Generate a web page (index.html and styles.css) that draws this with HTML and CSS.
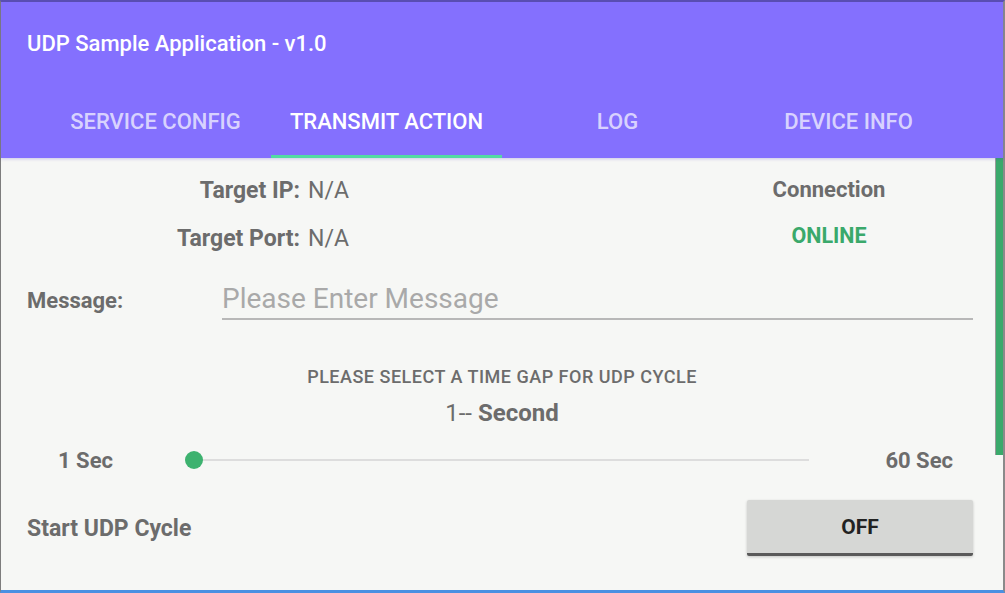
FILE: index.html
```html
<!DOCTYPE html>
<html>
<head>
<meta charset="utf-8">
<link rel="stylesheet" href="styles.css">
</head>
<body>
<div class="frame">
  <header class="appbar">
    <div class="title">UDP Sample Application - v1.0</div>
    <nav class="tabs">
      <div class="tab">SERVICE CONFIG</div>
      <div class="tab active">TRANSMIT ACTION</div>
      <div class="tab">LOG</div>
      <div class="tab">DEVICE INFO</div>
    </nav>
  </header>
  <main class="content">
    <div class="scrollbar"></div>
    <div class="info">
      <div class="lbl">Target IP:</div>
      <div class="val">N/A</div>
      <div class="conn">Connection</div>
      <div class="lbl">Target Port:</div>
      <div class="val">N/A</div>
      <div class="conn online">ONLINE</div>
    </div>
    <div class="msg-row">
      <div class="msg-label">Message:</div>
      <div class="msg-input">Please Enter Message</div>
    </div>
    <div class="gap-title">PLEASE SELECT A TIME GAP FOR UDP CYCLE</div>
    <div class="gap-value"><span class="num">1--</span> Second</div>
    <div class="slider-row">
      <div class="sec-min">1 Sec</div>
      <div class="track"><span class="thumb"></span></div>
      <div class="sec-max">60 Sec</div>
    </div>
    <div class="start-row">
      <div class="start-label">Start UDP Cycle</div>
      <div class="toggle">OFF</div>
    </div>
  </main>
</div>
</body>
</html>
```

FILE: styles.css
```css
html, body {
  margin: 0;
  padding: 0;
  overflow: hidden;
}
body {
  font-family: Roboto, "Liberation Sans", sans-serif;
  background: #f6f7f5;
}
.frame {
  width: 1005px;
  height: 593px;
  box-sizing: border-box;
  border-top: 2px solid #5a4fb3;
  border-left: 1px solid #7d7d7d;
  border-right: 2px solid #8a8a8a;
  border-bottom: 3px solid #4a90e2;
  display: flex;
  flex-direction: column;
  background: #f6f7f5;
}
.appbar {
  background: #8470fe;
  height: 156px;
  display: flex;
  flex-direction: column;
  box-shadow: 0 1px 3px rgba(80, 60, 200, 0.25);
  position: relative;
  z-index: 1;
}
.title {
  height: 84px;
  line-height: 84px;
  padding-left: 26px;
  color: #ffffff;
  font-size: 22px;
  font-weight: 500;
}
.tabs {
  height: 72px;
  display: flex;
  justify-content: center;
}
.tab {
  width: 231px;
  box-sizing: border-box;
  text-align: center;
  line-height: 71px;
  font-size: 22px;
  font-weight: 500;
  color: rgba(255, 255, 255, 0.7);
  border-bottom: 3px solid transparent;
}
.tab.active {
  color: #ffffff;
  border-bottom-color: #52dba3;
}
.content {
  flex: 1;
  position: relative;
  color: #6c6c6c;
}
.scrollbar {
  position: absolute;
  right: 0;
  top: 0;
  width: 7px;
  height: 297px;
  background: #3aa96b;
  border-left: 1px solid #9a9a9a;
}
.info {
  display: grid;
  grid-template-columns: 299px 1fr 226px;
  grid-auto-rows: 48px;
  padding-top: 8px;
  padding-right: 61px;
  align-items: center;
}
.lbl {
  text-align: right;
  font-size: 23px;
  font-weight: 700;
}
.val {
  padding-left: 8px;
  font-size: 23px;
}
.conn {
  text-align: center;
  font-size: 22px;
  font-weight: 700;
  padding-bottom: 2px;
}
.conn.online {
  color: #3aa96b;
  font-size: 21.5px;
  padding-bottom: 6px;
}
.msg-row {
  display: flex;
  align-items: center;
  margin-top: 18px;
  padding-left: 26px;
  padding-right: 30px;
}
.msg-label {
  width: 195px;
  font-size: 22px;
  font-weight: 700;
}
.msg-input {
  flex: 1;
  height: 38px;
  line-height: 38px;
  border-bottom: 2px solid #b8b8b8;
  font-size: 28px;
  color: #a9a9a9;
}
.gap-title {
  margin-top: 47px;
  text-align: center;
  line-height: 20px;
  font-size: 18px;
  letter-spacing: 0.5px;
  font-weight: 500;
}
.gap-value {
  margin-top: 13px;
  text-align: center;
  line-height: 26px;
  font-size: 24px;
  font-weight: 700;
}
.gap-value .num {
  font-weight: 400;
}
.slider-row {
  margin-top: 19px;
  height: 30px;
  display: flex;
  align-items: center;
  padding-left: 57px;
  padding-right: 50px;
  font-size: 22px;
  font-weight: 700;
}
.sec-min {
  width: 136px;
}
.track {
  flex: 1;
  height: 2px;
  background: #dddddd;
  margin-right: 76px;
  position: relative;
}
.thumb {
  position: absolute;
  left: -9px;
  top: -8px;
  width: 18px;
  height: 18px;
  border-radius: 50%;
  background: #3db26f;
}
.start-row {
  margin-top: 25px;
  display: flex;
  align-items: center;
  justify-content: space-between;
  padding-left: 26px;
  padding-right: 30px;
}
.start-label {
  font-size: 23px;
  font-weight: 700;
}
.toggle {
  width: 226px;
  height: 56px;
  box-sizing: border-box;
  background: #d6d7d5;
  border-bottom: 3px solid #5a5a5a;
  border-radius: 2px;
  box-shadow: 0 1px 3px rgba(0, 0, 0, 0.2);
  text-align: center;
  line-height: 55px;
  font-size: 21px;
  font-weight: 700;
  color: #222222;
}
```
